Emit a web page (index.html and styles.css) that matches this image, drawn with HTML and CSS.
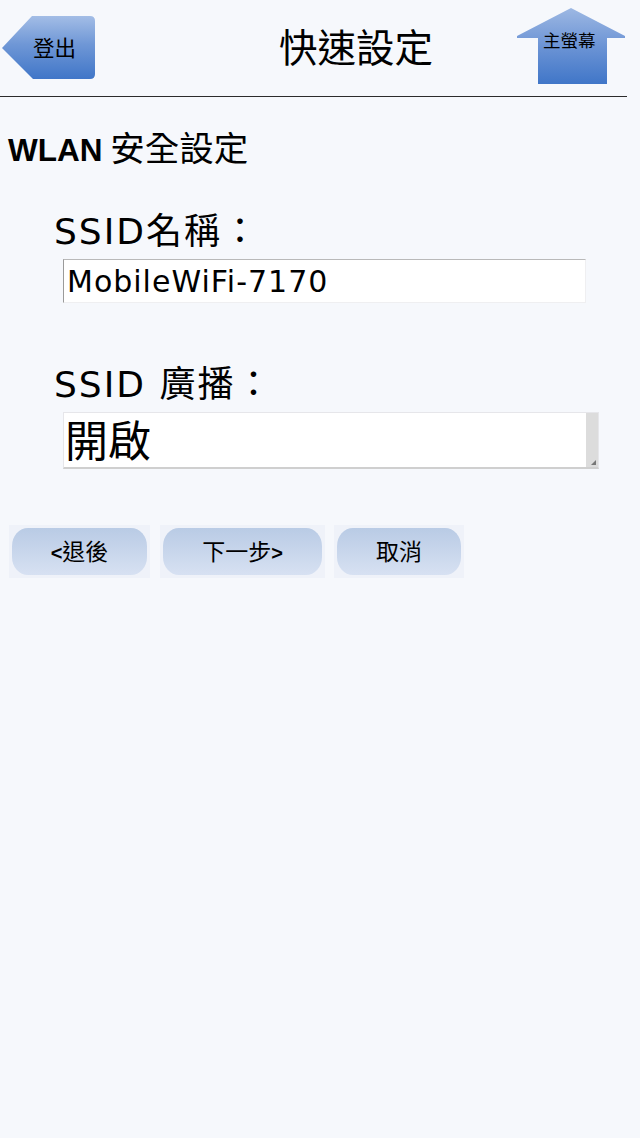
FILE: index.html
```html
<!DOCTYPE html>
<html lang="zh-Hant">
<head>
  <meta charset="UTF-8" />
  <meta name="viewport" content="width=device-width, initial-scale=1" />
  <title>快速設定</title>
  <link rel="stylesheet" href="styles.css">
</head>
<body>
  <header class="topbar">
    <a class="btn-logout" href="#">
      <svg class="nav-shape" viewBox="0 0 93 63" width="93" height="63" aria-hidden="true">
        <defs>
          <linearGradient id="navBlue" x1="0" y1="0" x2="0" y2="1">
            <stop offset="0" stop-color="#a3bde6" />
            <stop offset="0.45" stop-color="#6f97d6" />
            <stop offset="1" stop-color="#4076c8" />
          </linearGradient>
        </defs>
        <path d="M30 0H88Q93 0 93 5V58Q93 63 88 63H31L0 32Z" fill="url(#navBlue)" />
      </svg>
      <span class="nav-label">登出</span>
    </a>
    <h1>快速設定</h1>
    <a class="btn-home" href="#">
      <svg class="nav-shape" viewBox="0 0 108 76" width="108" height="76" aria-hidden="true">
        <defs>
          <linearGradient id="homeBlue" x1="0" y1="0" x2="0" y2="1">
            <stop offset="0" stop-color="#9db8e3" />
            <stop offset="0.5" stop-color="#6c94d5" />
            <stop offset="1" stop-color="#4076c8" />
          </linearGradient>
        </defs>
        <path d="M54 0L108 28V30H90V76H21V30H0V28Z" fill="url(#homeBlue)" />
      </svg>
      <span class="nav-label home-label">主螢幕</span>
    </a>
  </header>

  <main>
    <h2 class="section-title"><b>WLAN</b> 安全設定</h2>

    <div class="field">
      <label for="ssid">SSID名稱：</label>
      <input id="ssid" class="text-input" type="text" value="MobileWiFi-7170" />
    </div>

    <div class="field field-list">
      <label>SSID 廣播：</label>
      <div class="listbox">
        <span class="listbox-value">開啟</span>
        <span class="listbox-scroll"><span class="grip"></span></span>
      </div>
    </div>

    <div class="actions">
      <button class="wide-back"><span><b>&lt;</b>退後</span></button>
      <button class="wide-next"><span>下一步<b>&gt;</b></span></button>
      <button class="wide-cancel"><span>取消</span></button>
    </div>
  </main>
</body>
</html>
```

FILE: styles.css
```css
body {
  margin: 0;
  background: #f6f8fc;
  color: #000;
  font-family: "Noto Sans CJK TC", "Liberation Sans", sans-serif;
  height: 1138px;
  overflow: hidden;
}
.topbar {
  position: relative;
  width: 627px;
  height: 96px;
  border-bottom: 1px solid #2b2b2b;
  display: flex;
  justify-content: space-between;
}
.topbar h1 {
  margin: 0;
  position: absolute;
  left: 279px;
  top: 18px;
  font-size: 38.5px;
  line-height: 54px;
  font-weight: 400;
}
.btn-logout, .btn-home {
  position: relative;
  display: block;
  color: #000;
  text-decoration: none;
}
.btn-logout {
  width: 93px;
  height: 63px;
  margin: 16px 0 0 2px;
}
.btn-home {
  width: 108px;
  height: 76px;
  margin: 8px 2px 0 0;
}
.nav-shape {
  display: block;
}
.nav-label {
  position: absolute;
  left: 31px;
  top: 17px;
  font-size: 21.5px;
  line-height: 28px;
  white-space: nowrap;
}
.home-label {
  left: 26px;
  top: 20px;
  font-size: 17.5px;
  line-height: 24px;
}
.section-title {
  margin: 0;
  padding: 26px 0 0 8px;
  font-size: 34.5px;
  line-height: 46px;
  font-weight: 400;
}
.section-title b {
  font-family: "Liberation Sans", sans-serif;
  font-size: 31.5px;
}
.field {
  padding: 34px 0 0 54px;
}
.field-list {
  padding-top: 57px;
}
.field label {
  display: block;
  font-family: "DejaVu Sans", "Noto Sans CJK TC", sans-serif;
  font-size: 36px;
  letter-spacing: 2px;
  line-height: 50px;
}
.text-input {
  display: block;
  box-sizing: border-box;
  width: 523px;
  height: 44px;
  margin: 2px 0 0 9px;
  padding: 0 3px;
  background: #fff;
  border: 1px solid #efeff1;
  border-top: 1px solid #b9b9b9;
  border-left: 1px solid #9a9a9a;
  border-radius: 0;
  font-family: "DejaVu Sans", sans-serif;
  font-size: 30px;
  letter-spacing: 1px;
  color: #000;
}
.listbox {
  display: flex;
  box-sizing: border-box;
  width: 536px;
  height: 57px;
  margin: 2px 0 0 9px;
  background: #fff;
  border: 1px solid #e6e6ea;
  border-bottom: 2px solid #cfcfcf;
}
.listbox-value {
  flex: 1;
  padding-left: 1px;
  font-size: 43px;
  line-height: 50px;
}
.listbox-scroll {
  position: relative;
  width: 12px;
  background: #dcdcdc;
}
.grip {
  position: absolute;
  right: 2px;
  bottom: 2px;
  width: 0;
  height: 0;
  border-left: 5px solid transparent;
  border-bottom: 5px solid #777;
}
.actions {
  display: flex;
  gap: 10px;
  padding: 56px 0 0 9px;
}
.actions button {
  display: block;
  height: 53px;
  padding: 3px;
  border: 0;
  background: #eff2f9;
  font-family: inherit;
  color: #000;
}
.actions button span {
  display: block;
  height: 47px;
  border-radius: 16px / 18px;
  background: linear-gradient(to bottom, #b9cbe5, #d7e1f2);
  font-size: 23px;
  line-height: 44px;
}
.actions button b {
  font-family: "Liberation Sans", sans-serif;
  font-size: 20px;
}
.wide-back { width: 141px; }
.wide-next { width: 165px; margin-right: -1px; }
.wide-cancel { width: 130px; }
```
